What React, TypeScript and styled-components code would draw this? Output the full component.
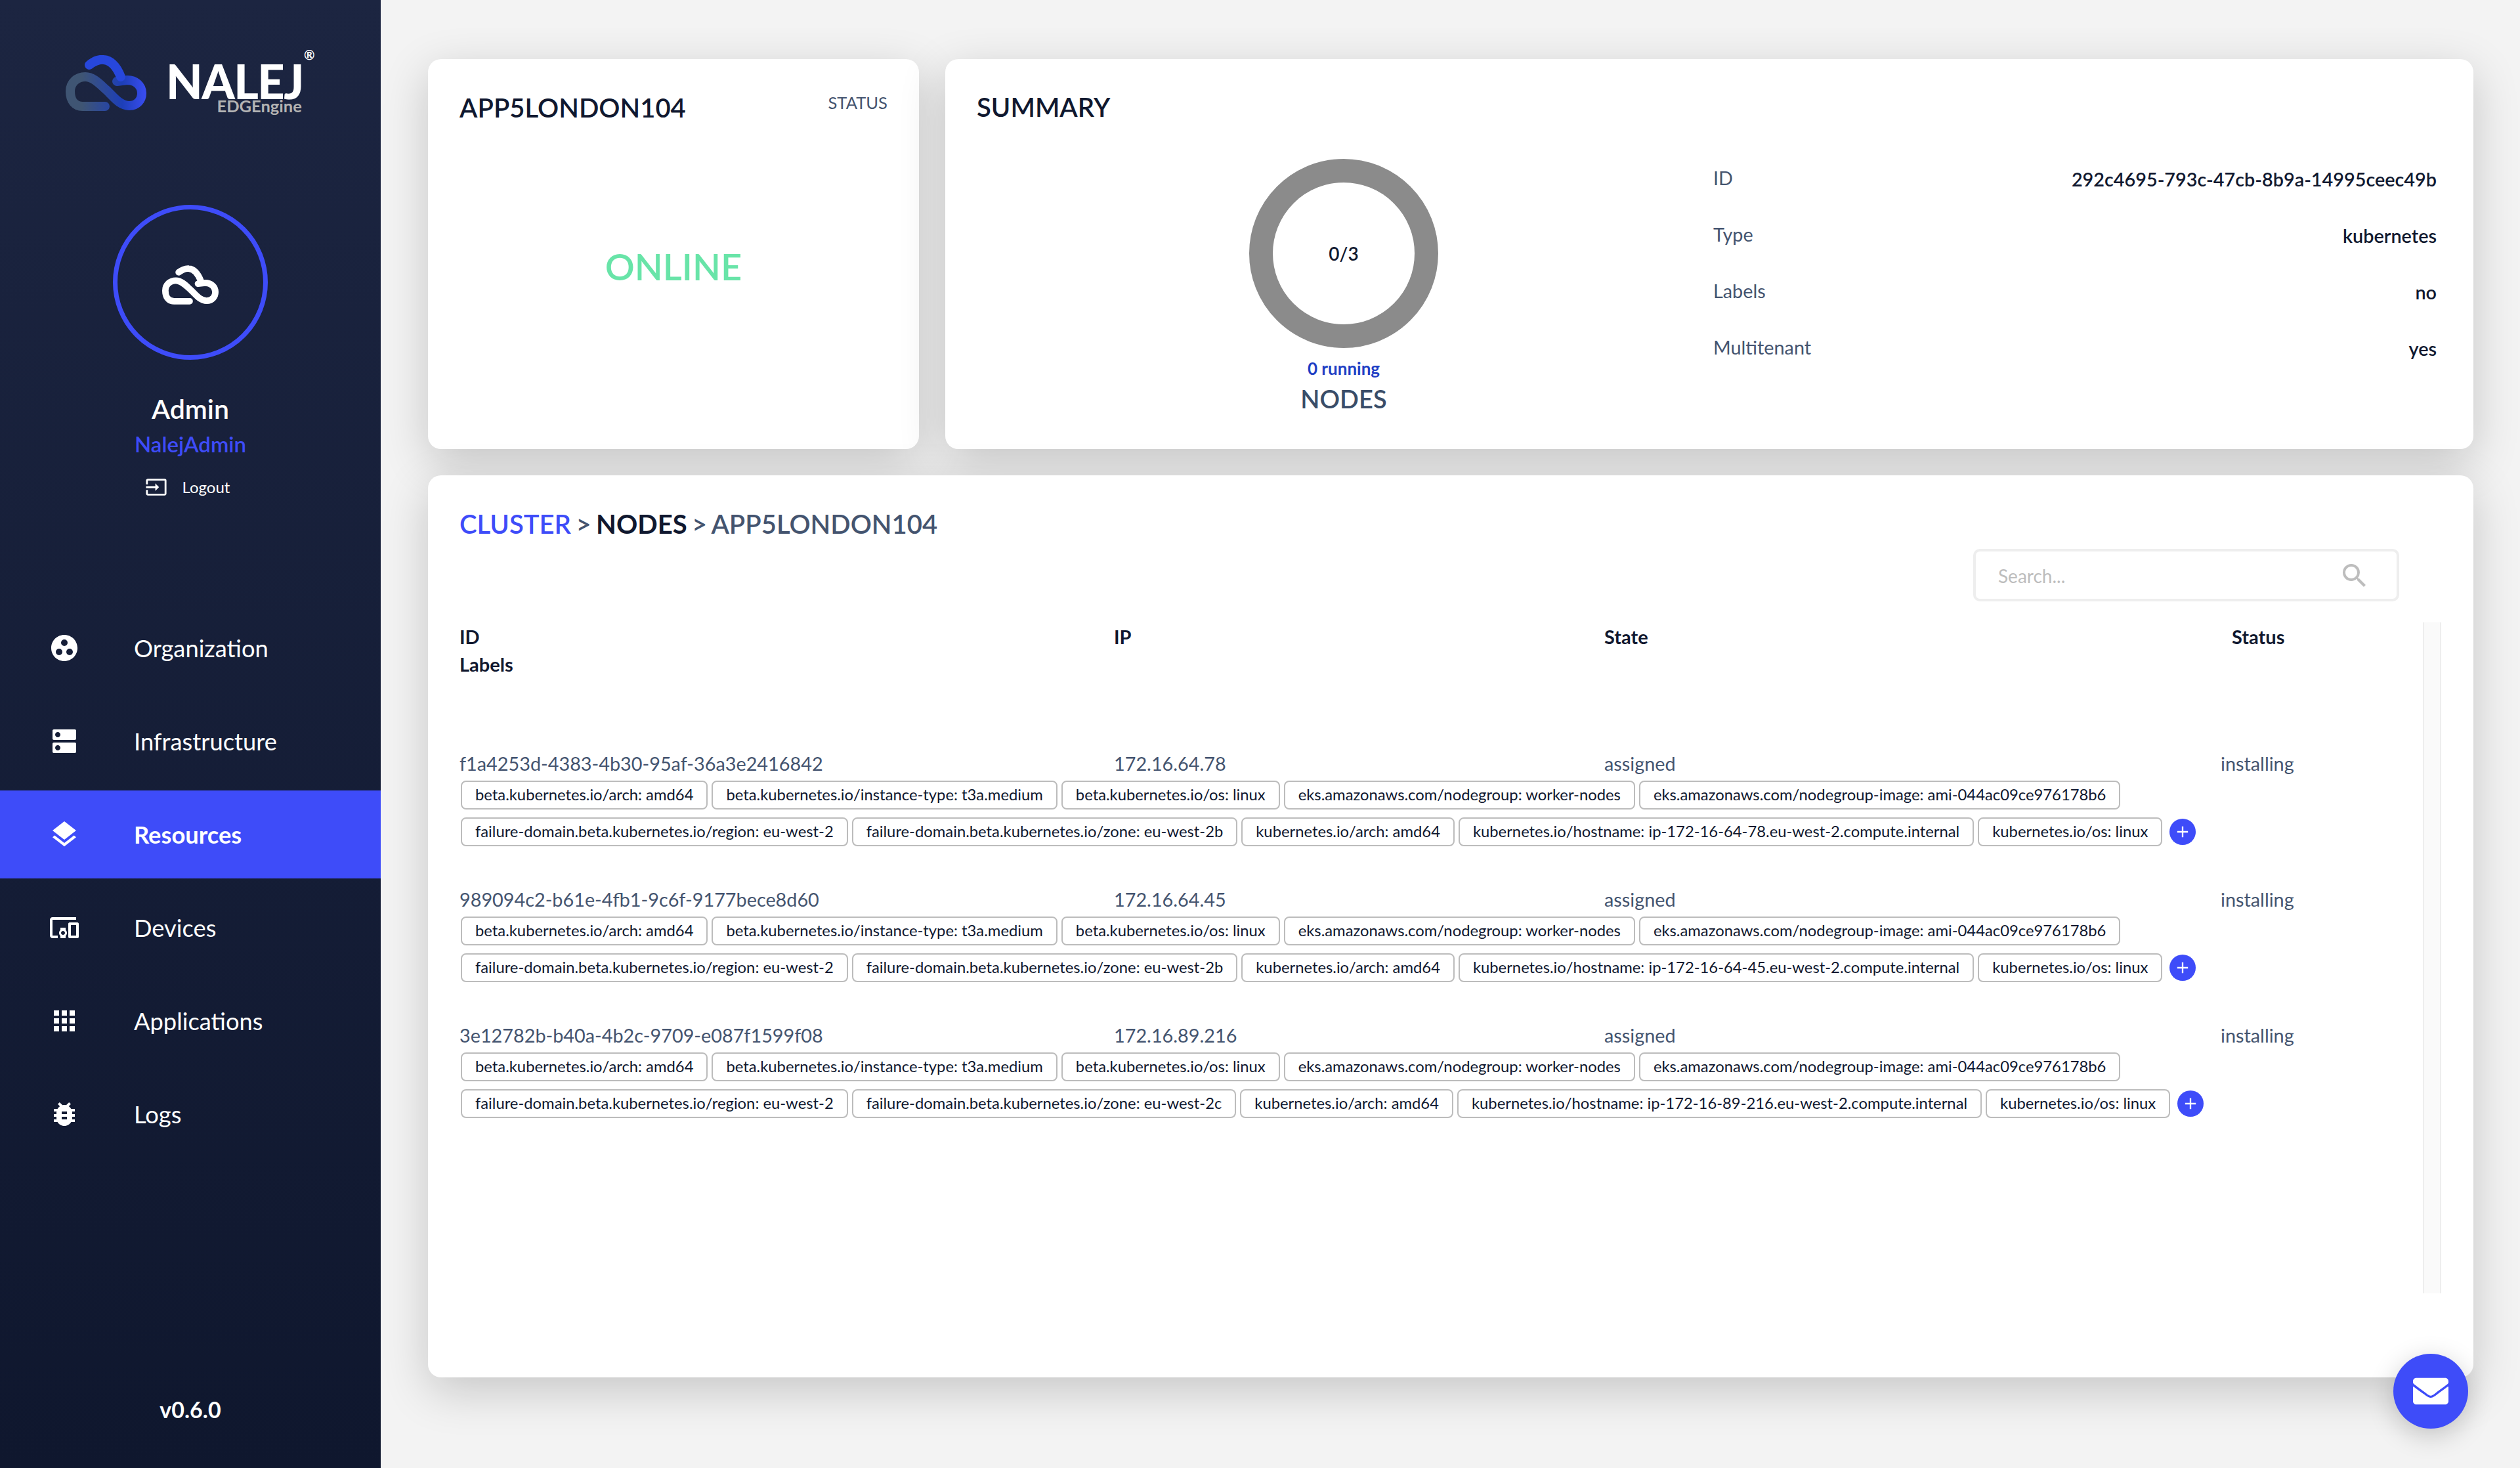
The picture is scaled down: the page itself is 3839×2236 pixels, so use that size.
import React from 'react';
import styled, { createGlobalStyle } from 'styled-components';
import { FaEnvelope } from 'react-icons/fa';
import {
  MdAdd,
  MdApps,
  MdBugReport,
  MdDevicesOther,
  MdDns,
  MdGroupWork,
  MdInput,
  MdLayers,
  MdSearch,
} from 'react-icons/md';

const CLOUD_LOWER =
  'M60 78 H26 C14 78 7 69 7 55 C7 42 17 33 30 33 C42 33 52 44 62 53 C72 62 82 77 97 77 C109 77 116 68 116 58 C116 46 106 38 94 38 L78 40';
const CLOUD_UPPER = 'M36 15 C44 9 50 6 58 7 C70 8 78 18 84 33';

const NAV_ITEMS = [
  { label: 'Organization', icon: MdGroupWork },
  { label: 'Infrastructure', icon: MdDns },
  { label: 'Resources', icon: MdLayers, active: true },
  { label: 'Devices', icon: MdDevicesOther },
  { label: 'Applications', icon: MdApps },
  { label: 'Logs', icon: MdBugReport },
];

const SUMMARY_ROWS = [
  ['ID', '292c4695-793c-47cb-8b9a-14995ceec49b'],
  ['Type', 'kubernetes'],
  ['Labels', 'no'],
  ['Multitenant', 'yes'],
];

const nodeLabels = (ip: string, zone: string) => [
  'beta.kubernetes.io/arch: amd64',
  'beta.kubernetes.io/instance-type: t3a.medium',
  'beta.kubernetes.io/os: linux',
  'eks.amazonaws.com/nodegroup: worker-nodes',
  'eks.amazonaws.com/nodegroup-image: ami-044ac09ce976178b6',
  'failure-domain.beta.kubernetes.io/region: eu-west-2',
  `failure-domain.beta.kubernetes.io/zone: ${zone}`,
  'kubernetes.io/arch: amd64',
  `kubernetes.io/hostname: ip-${ip.replace(/\./g, '-')}.eu-west-2.compute.internal`,
  'kubernetes.io/os: linux',
];

const NODES = [
  { id: 'f1a4253d-4383-4b30-95af-36a3e2416842', ip: '172.16.64.78', zone: 'eu-west-2b' },
  { id: '989094c2-b61e-4fb1-9c6f-9177bece8d60', ip: '172.16.64.45', zone: 'eu-west-2b' },
  { id: '3e12782b-b40a-4b2c-9709-e087f1599f08', ip: '172.16.89.216', zone: 'eu-west-2c' },
];

const App = () => (
  <Page>
    <GlobalStyle />
    <Sidebar>
      <Logo>
        <CloudMark width={123} height={85} viewBox="0 0 123 85">
          <defs>
            <linearGradient id="cloudFade" gradientUnits="userSpaceOnUse" x1="0" y1="0" x2="123" y2="0">
              <stop offset="0.2" stopColor="#3f5573" />
              <stop offset="0.7" stopColor="#1d3fb8" />
              <stop offset="1" stopColor="#3a4df2" />
            </linearGradient>
          </defs>
          <path d={CLOUD_LOWER} stroke="url(#cloudFade)" />
          <path d={CLOUD_UPPER} stroke="#2747dc" />
        </CloudMark>
        <Wordmark>
          NALEJ
          <Registered>®</Registered>
          <Edge>EDGEngine</Edge>
        </Wordmark>
      </Logo>
      <Avatar>
        <AvatarMark width={86} height={60} viewBox="0 0 123 85">
          <path d={CLOUD_LOWER} stroke="#fff" />
          <path d={CLOUD_UPPER} stroke="#fff" />
        </AvatarMark>
      </Avatar>
      <UserName>Admin</UserName>
      <UserRole>NalejAdmin</UserRole>
      <Logout>
        <MdInput size={34} />
        Logout
      </Logout>
      <Nav>
        {NAV_ITEMS.map(({ label, icon: Icon, active }) => (
          <NavItem key={label} $active={active}>
            <NavIcon>
              <Icon size={48} />
            </NavIcon>
            {label}
          </NavItem>
        ))}
      </Nav>
      <Version>v0.6.0</Version>
    </Sidebar>
    <Main>
      <TopRow>
        <StatusCard>
          <StatusHead>
            <CardTitle>APP5LONDON104</CardTitle>
            <StatusTag>STATUS</StatusTag>
          </StatusHead>
          <OnlineText>ONLINE</OnlineText>
        </StatusCard>
        <SummaryCard>
          <CardTitle>SUMMARY</CardTitle>
          <SummaryBody>
            <Gauge>
              <Donut>0/3</Donut>
              <Running>0 running</Running>
              <GaugeName>NODES</GaugeName>
            </Gauge>
            <SummaryTable>
              {SUMMARY_ROWS.map(([name, value]) => (
                <SummaryRow key={name}>
                  <SummaryName>{name}</SummaryName>
                  <SummaryValue>{value}</SummaryValue>
                </SummaryRow>
              ))}
            </SummaryTable>
          </SummaryBody>
        </SummaryCard>
      </TopRow>
      <NodesCard>
        <Breadcrumb>
          <CrumbLink>CLUSTER</CrumbLink> &gt; <CrumbStrong>NODES</CrumbStrong> &gt; APP5LONDON104
        </Breadcrumb>
        <SearchRow>
          <SearchBox>
            Search...
            <MdSearch size={48} />
          </SearchBox>
        </SearchRow>
        <TableArea>
          <Table>
            <HeadRow>
              <div>
                ID
                <br />
                Labels
              </div>
              <div>IP</div>
              <div>State</div>
              <div>Status</div>
            </HeadRow>
            {NODES.map((node) => (
              <NodeRow key={node.id}>
                <NodeLine>
                  <span>{node.id}</span>
                  <span>{node.ip}</span>
                  <span>assigned</span>
                  <span>installing</span>
                </NodeLine>
                <Chips>
                  {nodeLabels(node.ip, node.zone).map((label) => (
                    <Chip key={label}>{label}</Chip>
                  ))}
                  <AddButton>
                    <MdAdd size={28} />
                  </AddButton>
                </Chips>
              </NodeRow>
            ))}
          </Table>
          <ScrollTrack />
        </TableArea>
      </NodesCard>
    </Main>
    <MailButton>
      <FaEnvelope size={54} />
    </MailButton>
  </Page>
);

const GlobalStyle = createGlobalStyle`
  html, body {
    margin: 0;
    padding: 0;
  }
  body {
    font-family: Lato, "Open Sans", sans-serif;
    background: #f3f3f3;
  }
`;

const Page = styled.div`
  display: flex;
  width: 3839px;
  height: 2236px;
  overflow: hidden;
  background: #f3f3f3;
`;

const Sidebar = styled.aside`
  position: relative;
  z-index: 1;
  display: flex;
  flex-direction: column;
  align-items: center;
  flex: 0 0 580px;
  height: 2236px;
  color: #fff;
  background: linear-gradient(180deg, #1c2541 0%, #0f172e 100%);
`;

const Logo = styled.div`
  display: flex;
  align-items: flex-start;
  align-self: flex-start;
  gap: 30px;
  margin: 84px 0 0 100px;
  height: 228px;
`;

const CloudMark = styled.svg`
  flex: none;
  fill: none;
  stroke-width: 14;
  stroke-linecap: round;
  stroke-linejoin: round;
`;

const AvatarMark = styled(CloudMark)`
  margin-top: 7px;
`;

const Wordmark = styled.div`
  position: relative;
  margin-top: 7px;
  font-size: 72px;
  font-weight: 900;
  line-height: 64px;
  letter-spacing: -1.5px;
`;

const Registered = styled.span`
  position: absolute;
  top: -18px;
  left: 210px;
  font-size: 20px;
  font-weight: 700;
  line-height: 20px;
  letter-spacing: 0;
`;

const Edge = styled.span`
  position: absolute;
  top: 59px;
  right: 2px;
  font-size: 25.5px;
  font-weight: 700;
  line-height: 22px;
  letter-spacing: 0;
  color: #b3b3b3;
`;

const Avatar = styled.div`
  display: flex;
  align-items: center;
  justify-content: center;
  box-sizing: border-box;
  width: 236px;
  height: 236px;
  border: 7px solid #3e4cf9;
  border-radius: 50%;
`;

const UserName = styled.div`
  margin-top: 50px;
  font-size: 41px;
  font-weight: 600;
  line-height: 50px;
`;

const UserRole = styled.div`
  margin-top: 8px;
  font-size: 33px;
  font-weight: 600;
  line-height: 40px;
  color: #3e4cf9;
`;

const Logout = styled.div`
  display: flex;
  align-items: center;
  gap: 23px;
  margin-top: 28px;
  margin-right: 9px;
  font-size: 24px;
  line-height: 36px;
`;

const Nav = styled.nav`
  display: flex;
  flex-direction: column;
  gap: 8px;
  width: 100%;
  margin-top: 160px;
`;

const NavItem = styled.div<{ $active?: boolean }>`
  display: flex;
  align-items: center;
  height: 134px;
  font-size: 36.3px;
  font-weight: ${(p) => (p.$active ? 700 : 400)};
  background: ${(p) => (p.$active ? '#3e4cf9' : 'transparent')};
`;

const NavIcon = styled.div`
  display: flex;
  justify-content: center;
  width: 196px;
  margin-right: 8px;
`;

const Version = styled.div`
  margin-top: auto;
  margin-bottom: 68px;
  font-size: 34px;
  font-weight: 700;
  line-height: 42px;
`;

const Main = styled.main`
  display: flex;
  flex-direction: column;
  gap: 40px;
  flex: 1;
  padding: 90px 71px 0 72px;
`;

const TopRow = styled.div`
  display: flex;
  gap: 40px;
  height: 594px;
`;

const Card = styled.section`
  box-sizing: border-box;
  background: #fff;
  border-radius: 20px;
  box-shadow: 0 20px 70px rgba(0, 0, 0, 0.19);
`;

const StatusCard = styled(Card)`
  display: flex;
  flex-direction: column;
  flex: 0 0 748px;
  padding: 48px 48px 0;
`;

const StatusHead = styled.div`
  display: flex;
  justify-content: space-between;
  align-items: flex-start;
`;

const CardTitle = styled.h2`
  margin: 0;
  font-size: 40px;
  font-weight: 600;
  line-height: 52px;
  color: #10182f;
`;

const StatusTag = styled.span`
  font-size: 25.6px;
  line-height: 36px;
  color: #44546f;
`;

const OnlineText = styled.div`
  margin-top: 181px;
  font-size: 56px;
  font-weight: 600;
  line-height: 70px;
  text-align: center;
  color: #68e4a8;
`;

const SummaryCard = styled(Card)`
  flex: 1;
  padding: 47px 56px 0 48px;
`;

const SummaryBody = styled.div`
  display: flex;
`;

const Gauge = styled.div`
  display: flex;
  flex-direction: column;
  align-items: center;
  width: 1118px;
`;

const Donut = styled.div`
  display: flex;
  align-items: center;
  justify-content: center;
  box-sizing: border-box;
  width: 288px;
  height: 288px;
  margin-top: 53px;
  border: 36px solid #8b8b8b;
  border-radius: 50%;
  font-size: 28px;
  font-weight: 600;
  color: #10182f;
`;

const Running = styled.div`
  margin-top: 14px;
  font-size: 26px;
  font-weight: 700;
  line-height: 34px;
  color: #1f3fc4;
`;

const GaugeName = styled.div`
  margin-top: 5px;
  font-size: 38px;
  font-weight: 600;
  line-height: 48px;
  color: #3a4d68;
`;

const SummaryTable = styled.div`
  display: flex;
  flex-direction: column;
  gap: 50px;
  flex: 1;
  margin-top: 64px;
  margin-left: 4px;
`;

const SummaryRow = styled.div`
  display: flex;
  justify-content: space-between;
  height: 36px;
  font-size: 28.8px;
  line-height: 36px;
`;

const SummaryName = styled.span`
  color: #44546f;
`;

const SummaryValue = styled.span`
  padding-top: 2px;
  font-weight: 600;
  color: #10182f;
`;

const NodesCard = styled(Card)`
  height: 1374px;
  padding: 48px 48px 0;
`;

const Breadcrumb = styled.div`
  font-size: 40px;
  font-weight: 600;
  line-height: 52px;
  word-spacing: -2.5px;
  color: #44546f;
`;

const CrumbLink = styled.span`
  color: #3e4cf9;
`;

const CrumbStrong = styled.span`
  font-weight: 700;
  color: #10182f;
`;

const SearchRow = styled.div`
  display: flex;
  justify-content: flex-end;
  margin-top: 12px;
  padding-right: 65px;
`;

const SearchBox = styled.div`
  display: flex;
  align-items: center;
  justify-content: space-between;
  box-sizing: border-box;
  width: 649px;
  height: 80px;
  padding: 2px 40px 0 34px;
  border: 4px solid #eeeeee;
  border-radius: 10px;
  font-size: 28px;
  color: #bdbdbd;
`;

const TableArea = styled.div`
  display: flex;
  justify-content: space-between;
  height: 1022px;
  margin-top: 32px;
  padding-right: 1px;
`;

const Table = styled.div`
  display: flex;
  flex-direction: column;
  flex: 1;
  min-width: 0;
`;

const HeadRow = styled.div`
  display: grid;
  grid-template-columns: 997px 747px 956px auto;
  padding-top: 1px;
  height: 196px;
  font-size: 29px;
  font-weight: 700;
  line-height: 42px;
  color: #10182f;
`;

const NodeRow = styled.div`
  height: 207px;
`;

const NodeLine = styled.div`
  display: grid;
  grid-template-columns: 997px 747px 939px auto;
  font-size: 28.8px;
  line-height: 36px;
  color: #44546f;
`;

const Chips = styled.div`
  display: flex;
  flex-wrap: wrap;
  align-items: center;
  gap: 12px 6px;
  margin-top: 8px;
  padding-left: 2px;
  max-width: 2990px;
`;

const Chip = styled.span`
  box-sizing: border-box;
  height: 44px;
  padding: 0 20px;
  border: 2px solid #bcbcbc;
  border-radius: 8px;
  font-size: 23.8px;
  line-height: 39px;
  white-space: nowrap;
  color: #10182f;
`;

const AddButton = styled.span`
  display: flex;
  align-items: center;
  justify-content: center;
  width: 40px;
  height: 40px;
  margin-left: 5px;
  border-radius: 50%;
  color: #fff;
  background: #3e4cf9;
`;

const ScrollTrack = styled.div`
  flex: none;
  box-sizing: border-box;
  width: 28px;
  border-left: 2px solid #eeeeee;
  border-right: 2px solid #eeeeee;
  background: #fafafa;
`;

const MailButton = styled.div`
  position: absolute;
  top: 2062px;
  left: 3646px;
  display: flex;
  align-items: center;
  justify-content: center;
  width: 114px;
  height: 114px;
  border-radius: 50%;
  color: #fff;
  background: #3e4cf9;
  box-shadow: 0 10px 40px rgba(0, 0, 0, 0.2);
`;

export default App;
